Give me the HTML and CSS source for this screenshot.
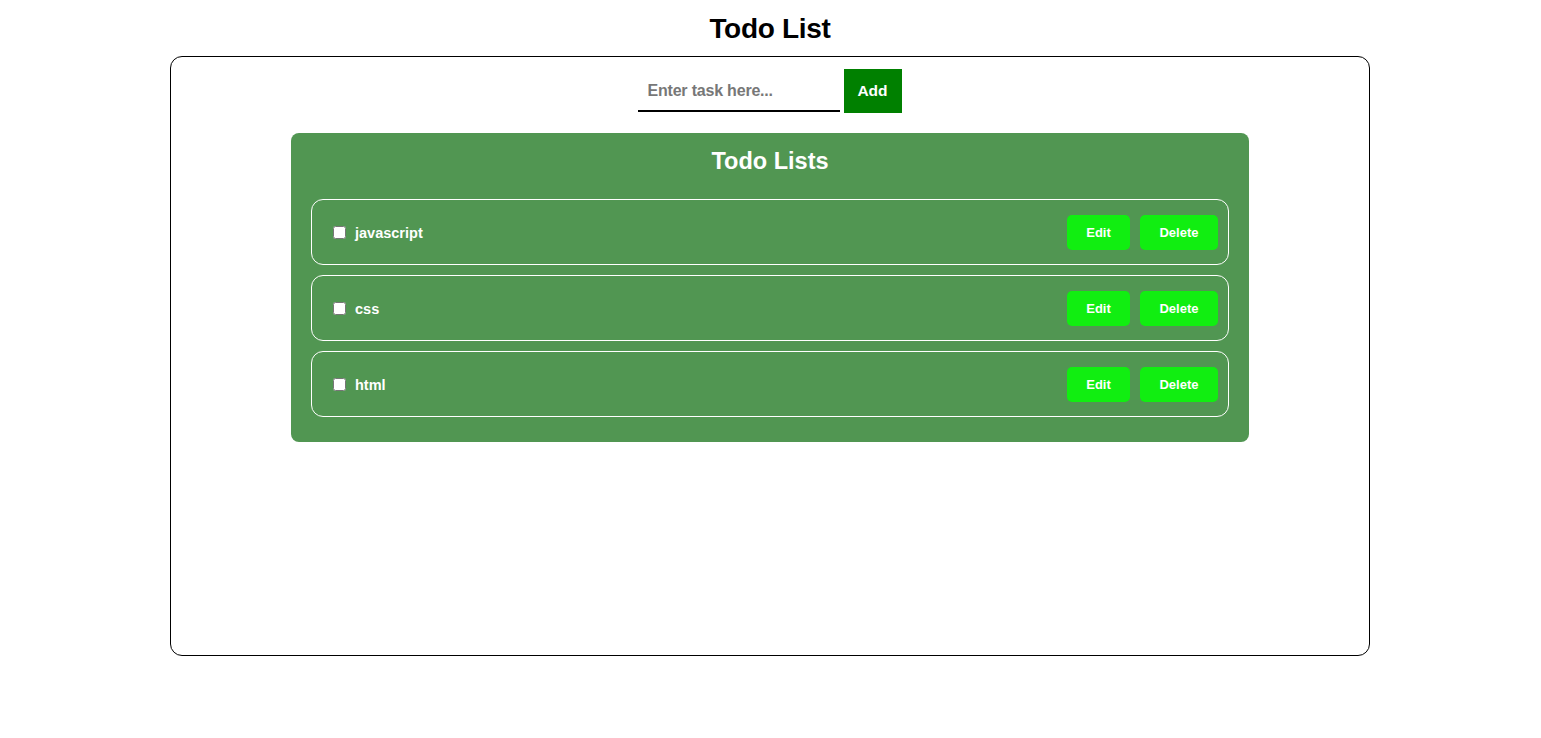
FILE: index.html
```html
<!DOCTYPE html>
<html lang="en">
<head>
<meta charset="utf-8">
<title>Todo List</title>
<link rel="stylesheet" href="styles.css">
</head>
<body>
<h1 class="title">Todo List</h1>
<div class="container">
  <form class="add-form">
    <input class="task-input" type="text" placeholder="Enter task here...">
    <button class="add-btn" type="button">Add</button>
  </form>
  <div class="panel">
    <h2 class="panel-title">Todo Lists</h2>
    <ul class="list">
      <li class="item">
        <label class="item-label"><input type="checkbox" class="check"><span class="item-text">javascript</span></label>
        <div class="actions"><button class="btn edit">Edit</button><button class="btn delete">Delete</button></div>
      </li>
      <li class="item">
        <label class="item-label"><input type="checkbox" class="check"><span class="item-text">css</span></label>
        <div class="actions"><button class="btn edit">Edit</button><button class="btn delete">Delete</button></div>
      </li>
      <li class="item">
        <label class="item-label"><input type="checkbox" class="check"><span class="item-text">html</span></label>
        <div class="actions"><button class="btn edit">Edit</button><button class="btn delete">Delete</button></div>
      </li>
    </ul>
  </div>
</div>
</body>
</html>
```
FILE: styles.css
```css
* { box-sizing: border-box; }
body {
  margin: 0;
  padding: 0 8px 0 7px;
  font-family: "Liberation Sans", Arial, sans-serif;
  font-weight: bold;
  background: #fff;
}
.title {
  margin: 0;
  padding-top: 12px;
  height: 56px;
  text-align: center;
  font-size: 28px;
  line-height: 34px;
  letter-spacing: -0.3px;
}
.container {
  width: 1200px;
  height: 600px;
  margin: 0 auto;
  border: 1px solid #000;
  border-radius: 12px;
  padding-top: 12px;
}
.add-form {
  display: flex;
  justify-content: center;
  gap: 4px;
  padding-right: 1px;
}
.task-input {
  width: 202px;
  height: 43px;
  border: none;
  border-bottom: 2px solid #000;
  padding: 3px 10px 0;
  font: bold 16px "Liberation Sans", sans-serif;
  letter-spacing: -0.2px;
  outline: none;
}
.task-input::placeholder { color: #777; }
.add-btn {
  width: 58px;
  height: 44px;
  padding: 0;
  background: #008000;
  color: #fff;
  border: none;
  font: bold 15.5px "Liberation Sans", sans-serif;
}
.panel {
  width: 958px;
  margin: 20px auto 0;
  background: #519652;
  border-radius: 8px;
  padding: 14px 20px 25px;
}
.panel-title {
  margin: 0 0 23px;
  color: #fff;
  text-align: center;
  font-size: 23.5px;
  line-height: 29px;
}
.list {
  list-style: none;
  margin: 0;
  padding: 0;
  display: flex;
  flex-direction: column;
  gap: 10px;
}
.item {
  height: 66px;
  border: 1px solid #fff;
  border-radius: 12px;
  display: flex;
  align-items: center;
  justify-content: space-between;
  padding: 0 10px 0 17px;
}
.item-label {
  display: flex;
  align-items: center;
  color: #fff;
  font-size: 14.5px;
  padding-top: 1px;
}
.check {
  width: 13px;
  height: 13px;
  margin: 0 9px 0 4px;
}
.actions {
  display: flex;
  gap: 10px;
}
.btn {
  height: 35px;
  border: none;
  border-radius: 5px;
  background: #11ee11;
  color: #fff;
  font: bold 13px "Liberation Sans", sans-serif;
}
.edit { width: 63px; }
.delete { width: 78px; }
```
